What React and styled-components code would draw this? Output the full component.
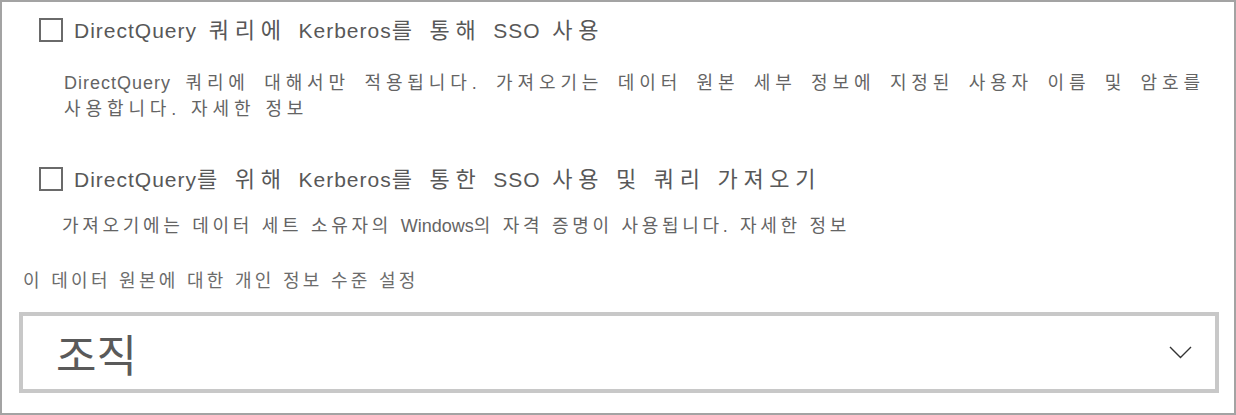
import React from 'react'
import styled, { createGlobalStyle } from 'styled-components'

const GlobalStyle = createGlobalStyle`
  html, body {
    margin: 0;
    padding: 0;
    background: #ffffff;
  }
  * {
    box-sizing: border-box;
  }
`

const Panel = styled.div`
  width: 1236px;
  height: 415px;
  border: 2px solid #a3a3a3;
  background: #ffffff;
  display: flex;
  flex-direction: column;
  font-family: "Liberation Sans", "Noto Sans CJK KR", sans-serif;
  color: #5f5f5f;
  overflow: hidden;
`

const OptionRow = styled.label`
  display: flex;
  align-items: center;
  gap: 11px;
  height: 24px;
  margin-top: ${p => p.$top}px;
  padding-left: 37px;
  cursor: pointer;
`

const Box = styled.span`
  width: 24px;
  height: 24px;
  flex: none;
  border: 2px solid #6a6a6a;
  background: #fff;
`

const OptionTitle = styled.span`
  font-size: 22px;
  letter-spacing: 5.7px;
  line-height: 24px;
  white-space: nowrap;
  color: #585858;
  padding-top: 2px;
`

// product names keep a tighter latin spacing than the hangul around them
const Term = styled.span`
  font-size: ${p => (p.$size ? `${p.$size}px` : 'inherit')};
  letter-spacing: ${p => p.$spacing ?? 1}px;
`

const Help = styled.p`
  margin: ${p => p.$top}px 0 0 0;
  padding-left: ${p => p.$indent}px;
  padding-right: 29px;
  font-size: 18px;
  letter-spacing: ${p => p.$spacing}px;
  line-height: 26px;
  color: #646464;
  text-align: justify;
  text-justify: inter-character;
  word-break: keep-all;
`

const FieldLabel = styled.div`
  margin-top: ${p => p.$top}px;
  padding-left: 21px;
  font-size: 18px;
  letter-spacing: 3.3px;
  line-height: 24px;
  color: #6c6c6c;
`

const Select = styled.div`
  margin: 19px 0 0 17px;
  width: 1200px;
  height: 81px;
  border: 4px solid #c8c8c8;
  display: flex;
  align-items: center;
  justify-content: space-between;
  padding: 0 23px 0 33px;
`

const SelectValue = styled.span`
  font-size: 44px;
  color: #5a5a5a;
  line-height: 48px;
  padding-top: 9px;
`

const Chevron = () => (
  <svg width="23" height="13" viewBox="0 0 23 13" fill="none">
    <path d="M1 1 L11.5 11.5 L22 1" stroke="#333" strokeWidth="1.4" />
  </svg>
)

const App = () => {
  return (
    <>
      <GlobalStyle />
      <Panel>
        <OptionRow $top={16}>
          <Box />
          <OptionTitle>
            <Term $size={21}>DirectQuery</Term> 쿼리에 <Term $size={21}>Kerberos</Term>를 통해 <Term $size={21}>SSO</Term> 사용
          </OptionTitle>
        </OptionRow>
        <Help $top={28} $indent={62} $spacing={4.9}>
          <Term $spacing={1}>DirectQuery</Term> 쿼리에 대해서만 적용됩니다. 가져오기는 데이터 원본 세부 정보에 지정된 사용자 이름 및 암호를 사용합니다. 자세한 정보
        </Help>

        <OptionRow $top={45}>
          <Box />
          <OptionTitle>
            <Term $size={21}>DirectQuery</Term>를 위해 <Term $size={21}>Kerberos</Term>를 통한 <Term $size={21}>SSO</Term> 사용 및 쿼리 가져오기
          </OptionTitle>
        </OptionRow>
        <Help $top={22} $indent={60} $spacing={3.7}>
          가져오기에는 데이터 세트 소유자의 <Term $spacing={0}>Windows</Term>의 자격 증명이 사용됩니다. 자세한 정보
        </Help>

        <FieldLabel $top={30}>이 데이터 원본에 대한 개인 정보 수준 설정</FieldLabel>

        <Select>
          <SelectValue>조직</SelectValue>
          <Chevron />
        </Select>
      </Panel>
    </>
  )
}

export default App
